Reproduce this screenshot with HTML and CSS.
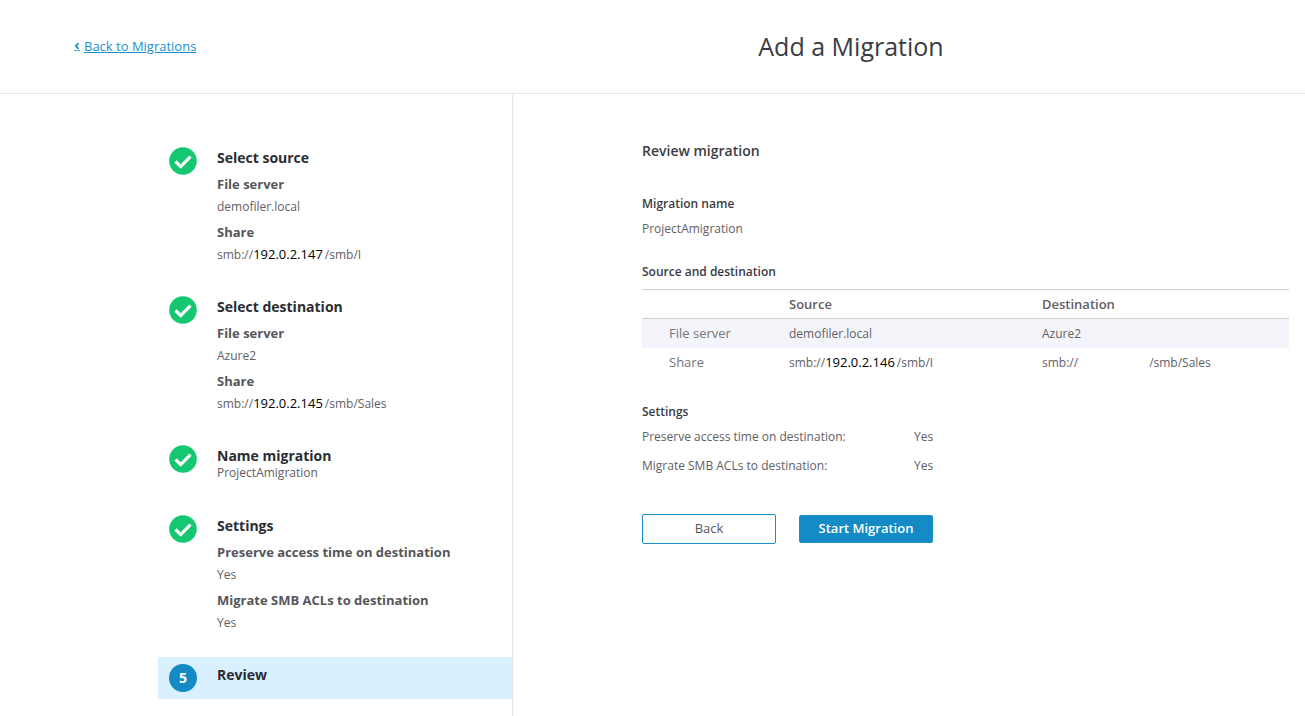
FILE: index.html
```
<!DOCTYPE html>
<html lang="en">
<head>
<meta charset="utf-8">
<title>Add a Migration</title>
<link rel="stylesheet" href="styles.css">
</head>
<body>
<header class="header">
  <div class="header-nav">
    <a class="back-link" href="#">
      <svg class="chevron" viewBox="0 0 6 10" aria-hidden="true"><path d="M4.6 2.2 1.9 5l2.7 2.8" fill="none" stroke="#1b8fc9" stroke-width="1.8"/><path d="M0 9.5h6" stroke="#4aa9d8" stroke-width="1"/></svg>
      <span class="back-text">Back to Migrations</span>
    </a>
  </div>
  <h1 class="page-title">Add a Migration</h1>
</header>
<div class="layout">
  <aside class="sidebar">
    <ol class="steps">
      <li class="step">
        <svg class="badge" viewBox="0 0 28 28" aria-hidden="true"><circle cx="14" cy="14" r="13.8" fill="#14c770"/><path d="M6.5 14.5 11.7 19.6 21.5 9.6" fill="none" stroke="#fff" stroke-width="3.2"/></svg>
        <div class="step-body">
          <h2 class="step-title">Select source</h2>
          <dl class="facts">
            <dt>File server</dt><dd>demofiler.local</dd>
            <dt>Share</dt><dd>smb://<span class="ip">192.0.2.147</span>/smb/I</dd>
          </dl>
        </div>
      </li>
      <li class="step">
        <svg class="badge" viewBox="0 0 28 28" aria-hidden="true"><circle cx="14" cy="14" r="13.8" fill="#14c770"/><path d="M6.5 14.5 11.7 19.6 21.5 9.6" fill="none" stroke="#fff" stroke-width="3.2"/></svg>
        <div class="step-body">
          <h2 class="step-title">Select destination</h2>
          <dl class="facts">
            <dt>File server</dt><dd>Azure2</dd>
            <dt>Share</dt><dd>smb://<span class="ip">192.0.2.145</span>/smb/Sales</dd>
          </dl>
        </div>
      </li>
      <li class="step">
        <svg class="badge" viewBox="0 0 28 28" aria-hidden="true"><circle cx="14" cy="14" r="13.8" fill="#14c770"/><path d="M6.5 14.5 11.7 19.6 21.5 9.6" fill="none" stroke="#fff" stroke-width="3.2"/></svg>
        <div class="step-body">
          <h2 class="step-title">Name migration</h2>
          <p class="step-note">ProjectAmigration</p>
        </div>
      </li>
      <li class="step">
        <svg class="badge" viewBox="0 0 28 28" aria-hidden="true"><circle cx="14" cy="14" r="13.8" fill="#14c770"/><path d="M6.5 14.5 11.7 19.6 21.5 9.6" fill="none" stroke="#fff" stroke-width="3.2"/></svg>
        <div class="step-body">
          <h2 class="step-title">Settings</h2>
          <dl class="facts">
            <dt>Preserve access time on destination</dt><dd>Yes</dd>
            <dt>Migrate SMB ACLs to destination</dt><dd>Yes</dd>
          </dl>
        </div>
      </li>
      <li class="step step-current" aria-current="step">
        <span class="badge badge-number">5</span>
        <div class="step-body">
          <h2 class="step-title">Review</h2>
        </div>
      </li>
    </ol>
  </aside>
  <main class="main">
    <h2 class="review-title">Review migration</h2>
    <section class="section">
      <h3 class="section-title">Migration name</h3>
      <p class="text">ProjectAmigration</p>
    </section>
    <section class="section">
      <h3 class="section-title">Source and destination</h3>
      <table class="table">
        <colgroup><col class="col-label"><col class="col-source"><col></colgroup>
        <thead>
          <tr><td></td><th scope="col">Source</th><th scope="col">Destination</th></tr>
        </thead>
        <tbody>
          <tr class="striped"><th scope="row">File server</th><td>demofiler.local</td><td>Azure2</td></tr>
          <tr><th scope="row">Share</th><td>smb://<span class="ip">192.0.2.146</span>/smb/I</td><td>smb://<span class="blank"></span>/smb/Sales</td></tr>
        </tbody>
      </table>
    </section>
    <section class="section">
      <h3 class="section-title">Settings</h3>
      <dl class="settings">
        <dt>Preserve access time on destination:</dt><dd>Yes</dd>
        <dt>Migrate SMB ACLs to destination:</dt><dd>Yes</dd>
      </dl>
    </section>
    <div class="actions">
      <button class="button" type="button">Back</button>
      <button class="button button-primary" type="button">Start Migration</button>
    </div>
  </main>
</div>
</body>
</html>
```
FILE: styles.css
```
* {
  box-sizing: border-box;
}

body {
  margin: 0;
  min-height: 100vh;
  display: flex;
  flex-direction: column;
  background: #fff;
  color: #5f6065;
  font: 12px/22px "Open Sans", sans-serif;
}

h1, h2, h3, p, dl, dd, ol {
  margin: 0;
  padding: 0;
}

.header {
  display: flex;
  align-items: center;
  height: 94px;
  border-bottom: 1px solid #e4e4ec;
}

.header-nav {
  width: 397px;
  padding-left: 74px;
}

.back-link {
  display: inline-flex;
  align-items: center;
  gap: 4px;
  color: #1b8fc9;
  font-size: 13px;
  text-decoration: none;
}

.back-text {
  text-decoration: underline;
}

.chevron {
  width: 6px;
  height: 10px;
}

.page-title {
  flex: 1;
  padding-bottom: 2px;
  color: #3b3b42;
  font-size: 25px;
  font-weight: 400;
  line-height: 32px;
  text-align: center;
}

.layout {
  flex: 1;
  display: flex;
}

.sidebar {
  flex: 0 0 513px;
  padding: 46px 0 17px 158px;
  border-right: 1px solid #e4e4ec;
}

.steps {
  list-style: none;
}

.step {
  display: flex;
  gap: 20px;
  padding: 7px 11px 22px;
}

.step-current {
  padding-bottom: 7px;
  background: #d9f0ff;
}

.badge {
  flex: none;
  width: 28px;
  height: 28px;
}

.badge-number {
  border-radius: 50%;
  background: #148bc4;
  color: #fff;
  font-size: 14px;
  font-weight: 700;
  line-height: 28px;
  text-align: center;
}

.step-title {
  padding-top: 2px;
  color: #2c2c33;
  font-size: 14px;
  font-weight: 700;
  line-height: 18px;
}

.step-note {
  padding-bottom: 5px;
  line-height: 16px;
}

.facts {
  padding-top: 4px;
}

.facts dt {
  padding-top: 2px;
  color: #55565c;
  font-size: 13px;
  font-weight: 700;
}

.facts dd {
  line-height: 24px;
}

.ip {
  margin-right: 2px;
  color: #000;
  font-size: 13px;
  line-height: 20px;
}

.main {
  flex: 1;
  padding: 46px 16px 24px 129px;
}

.review-title {
  margin-bottom: 31px;
  color: #3b3b42;
  font-size: 14px;
  font-weight: 600;
}

.section-title {
  margin-bottom: 3px;
  color: #3b3b42;
  font-size: 12px;
  font-weight: 600;
}

.section {
  margin-bottom: 21px;
}

.table {
  width: 100%;
  margin: 6px 0 24px;
  border-collapse: collapse;
  table-layout: fixed;
}

.col-label {
  width: 147px;
}

.col-source {
  width: 253px;
}

.table th,
.table td {
  height: 29px;
  padding: 0;
  text-align: left;
}

.table tbody td {
  padding-top: 2px;
}

.table thead tr {
  border-top: 1px solid #cfcfd2;
  border-bottom: 1px solid #cfcfd2;
}

.table thead th {
  color: #5f6065;
  font-size: 13px;
  font-weight: 600;
}

.table tbody th {
  padding-left: 27px;
  color: #74757a;
  font-size: 13px;
  font-weight: 400;
}

.striped {
  background: #f4f5fb;
}

.blank {
  display: inline-block;
  width: 71px;
}

.settings {
  display: grid;
  grid-template-columns: 272px 1fr;
  row-gap: 7px;
}

.actions {
  display: flex;
  align-items: center;
  gap: 23px;
  padding-top: 16px;
}

.button {
  width: 134px;
  height: 30px;
  padding: 0 0 2px;
  border: 1px solid #1b8fc9;
  border-radius: 2px;
  background: #fff;
  color: #55565c;
  font: 13px/20px "Open Sans", sans-serif;
}

.button-primary {
  height: 28px;
  background: #148bc4;
  color: #fff;
  font-weight: 600;
}
```
